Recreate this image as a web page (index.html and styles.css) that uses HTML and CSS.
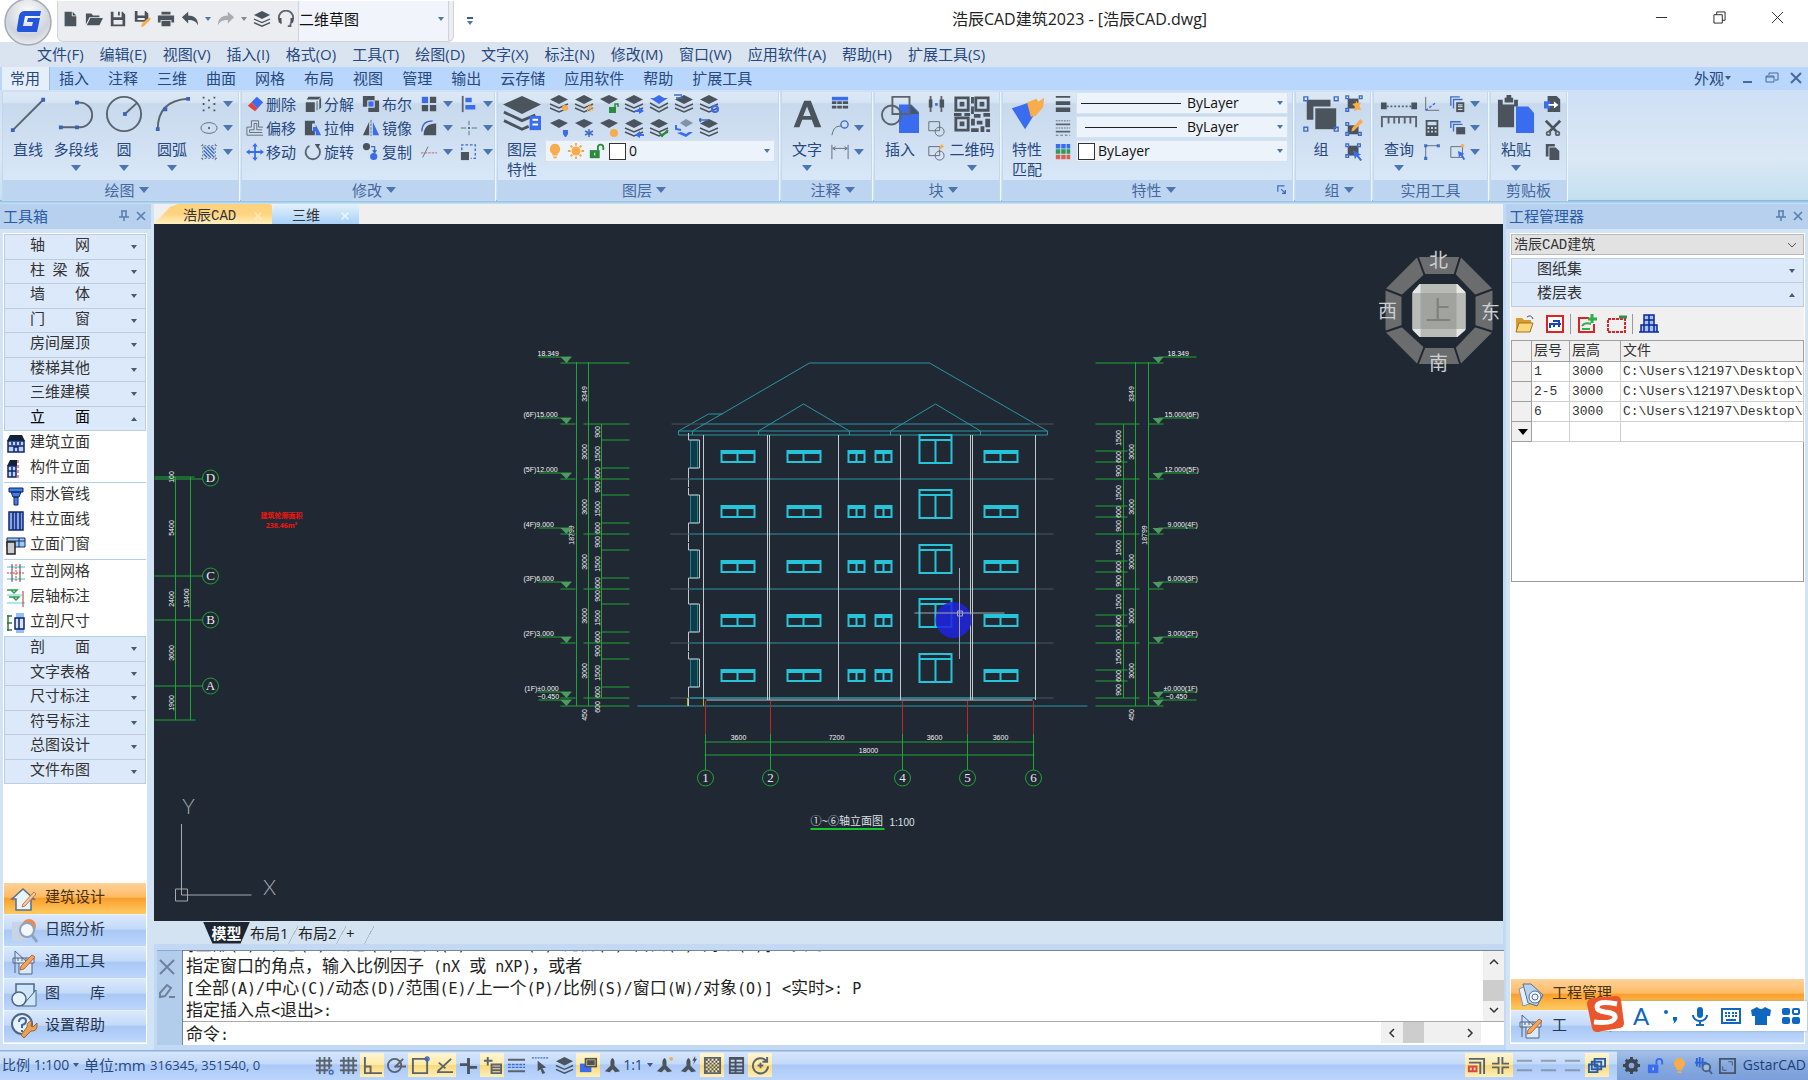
FILE: index.html
```
<!DOCTYPE html>
<html lang="zh-CN">
<head>
    <meta charset="UTF-8">
    <meta name="viewport" content="width=device-width, initial-scale=1.0">
    <title>浩辰CAD建筑2023</title>
    <link rel="stylesheet" href="styles.css">
</head>
<body>
    <!-- shared symbols -->
    <svg class="sprite" aria-hidden="true">
        <symbol id="stack" viewBox="0 0 20 20">
            <path class="d" d="M10 1l9 4.500-9 4.500-9-4.500z"/>
            <path class="ln" d="M1 10l9 4 9-4M1 14l9 4 9-4"/>
        </symbol>
        <symbol id="bulb" viewBox="0 0 20 20">
            <path class="o" d="M10 2a6 6 0 0 0-3 11v2h6v-2a6 6 0 0 0-3-11zM8 16h4v2H8z"/>
        </symbol>
        <symbol id="lock" viewBox="0 0 20 20">
            <path d="M2 9h11v9H2z"/>
            <path d="M11 9V6a3 3 0 0 1 6 0v3" fill="none" stroke="currentColor" stroke-width="2"/>
            <path d="M7 12h1v3H7z" fill="#fff"/>
        </symbol>
        <symbol id="person" viewBox="0 0 20 20">
            <path class="d" d="M10 2c3 2 2 6 2 8l6 6-5 1-3-3-3 3-5-1 6-6c0-2-1-6 2-8z"/>
        </symbol>
        <symbol id="ruler" viewBox="0 0 28 28">
            <path d="M5 2v22M5 2l12 11M3 9h21v5H3zM8 9v3M12 9v3M16 9v3M20 9v3M9 14v11h13V14" fill="#dbe9f8" stroke="#4d6585"/>
            <path d="M25 8L14 20l-4 1 1-4L22 6z" fill="#f6a35c" stroke="#b96a32"/>
        </symbol>
        <symbol id="pin" viewBox="0 0 12 12">
            <path d="M3 1h6M4 1v6M8 1v6M1 7h10M6 7v4" fill="none" stroke="#5a7cae" stroke-width="1.500"/>
        </symbol>
        <symbol id="cross" viewBox="0 0 12 12">
            <path d="M2 2l8 8M10 2l-8 8" fill="none" stroke="#5a7cae" stroke-width="1.600"/>
        </symbol>
    </svg>

    <header class="titlebar">
        <button class="app-button" aria-label="菜单">
            <svg viewBox="0 0 48 48">
                <defs>
                    <radialGradient id="orb" cx=".5" cy=".3" r=".7">
                        <stop offset="0" stop-color="#fff"/><stop offset=".7" stop-color="#cfd3dc"/><stop offset="1" stop-color="#e9ebf0"/>
                    </radialGradient>
                </defs>
                <circle cx="24" cy="24" r="23" fill="url(#orb)" stroke="#a3a8b3" stroke-width="1.500"/>
                <path d="M37 13l-1 5H21l-2 10h9l1-4h-6l1-4h12l-3 14H15q-3 0-2-4l2-12q1-5 6-5z" fill="#2257dc"/>
            </svg>
        </button>
        <div class="quick">
            <button aria-label="新建"><svg viewBox="0 0 20 20"><path class="d" d="M4 2h8v5h5v11H4zM13 2l4 4h-4z"/></svg></button>
            <button aria-label="打开"><svg viewBox="0 0 20 20"><path class="d" d="M1 16V4h6l2 2h7v2H5zM6 9h14l-4 8H2z"/></svg></button>
            <button aria-label="保存"><svg viewBox="0 0 20 20"><path class="d" d="M2 2h3v6h9V2h1l3 3v13H2zm3 9v5h10v-5zM10 2h2v4h-2z" fill-rule="evenodd"/></svg></button>
            <button aria-label="另存为"><svg viewBox="0 0 20 20"><path class="d" d="M2 1h3v5h8V1h1l3 3v9H2zm3 8v2h8V9z" fill-rule="evenodd"/><path class="o" d="M18 8l2 2-8 8-3 1 1-4z"/></svg></button>
            <button aria-label="打印"><svg viewBox="0 0 20 20"><path class="d" d="M5 2h10v3H5zM1 6h18v8h-3v-3H4v3H1zM5 12h10v6H5z"/></svg></button>
            <button aria-label="撤销"><svg viewBox="0 0 20 20"><path class="d" d="M1 8l7-6v4c6 0 11 3 11 11-2-4-5-6-11-6v4z"/></svg></button>
            <i class="tri sm"></i>
            <button aria-label="重做"><svg viewBox="0 0 20 20"><path fill="#a9adb3" d="M19 8l-7-6v4C6 6 1 9 1 17c2-4 5-6 11-6v4z"/></svg></button>
            <i class="tri sm grey"></i>
            <button aria-label="图层"><svg viewBox="0 0 20 20"><use href="#stack"/></svg></button>
            <button aria-label="客服"><svg viewBox="0 0 20 20"><path class="ln2" d="M5 15a8 8 0 1 1 10 0M12 18h3v-3"/><path class="d" d="M2 9h3v5H2zM15 9h3v5h-3z"/></svg></button>
            <div class="space-box">
                <select aria-label="工作空间"><option>二维草图</option></select><i class="tri sm"></i>
            </div>
        </div>
        <button class="more" aria-label="自定义"><span></span><i class="tri sm"></i></button>
        <h1>浩辰CAD建筑2023 - [浩辰CAD.dwg]</h1>
        <div class="win-buttons">
            <button aria-label="最小化"><svg viewBox="0 0 14 14"><path d="M1 7h12"/></svg></button>
            <button aria-label="还原"><svg viewBox="0 0 14 14"><path d="M1 4h9v9H1zM4 4V1h9v9h-3"/></svg></button>
            <button aria-label="关闭"><svg viewBox="0 0 14 14"><path d="M1 1l12 12M13 1L1 13"/></svg></button>
        </div>
    </header>

    <nav class="menubar">
        <a href="#">文件(F)</a><a href="#">编辑(E)</a><a href="#">视图(V)</a><a href="#">插入(I)</a><a href="#">格式(O)</a><a href="#">工具(T)</a><a href="#">绘图(D)</a><a href="#">文字(X)</a><a href="#">标注(N)</a><a href="#">修改(M)</a><a href="#">窗口(W)</a><a href="#">应用软件(A)</a><a href="#">帮助(H)</a><a href="#">扩展工具(S)</a>
    </nav>

    <nav class="tabs">
        <a class="active" href="#">常用</a><a href="#">插入</a><a href="#">注释</a><a href="#">三维</a><a href="#">曲面</a><a href="#">网格</a><a href="#">布局</a><a href="#">视图</a><a href="#">管理</a><a href="#">输出</a><a href="#">云存储</a><a href="#">应用软件</a><a href="#">帮助</a><a href="#">扩展工具</a>
        <div class="tabs-right">
            <button>外观<i class="tri xs"></i></button>
            <button aria-label="最小化"><svg viewBox="0 0 14 14"><path d="M2 11h9" stroke-width="2"/></svg></button>
            <button aria-label="还原"><svg viewBox="0 0 14 14"><path d="M1 5h8v6H1zM4 4V2h9v7h-3M1 6h8" /></svg></button>
            <button aria-label="关闭"><svg viewBox="0 0 14 14"><path d="M2 2l10 10M12 2L2 12" stroke-width="2"/></svg></button>
        </div>
    </nav>

    <section class="ribbon">
        <div class="panel p-draw">
            <div class="tools">
                <button class="big"><svg viewBox="0 0 40 40"><path class="ln2" d="M4 37L36 5"/><path class="n" d="M2 35h4v4H2zM34 3h4v4h-4z"/></svg>直线</button>
                <button class="big"><svg viewBox="0 0 40 40"><path class="ln2" d="M20 8h4a13 13 0 0 1 0 26H4"/><path class="n" d="M19 6h4v4h-4zM2 32h4v4H2zM19 32h4v4h-4z"/></svg>多段线<i class="tri"></i></button>
                <button class="big"><svg viewBox="0 0 40 40"><circle class="ln2" cx="20" cy="20" r="18"/><path class="ln2" d="M21 20L34 8"/><path class="n" d="M19 18h4v4h-4z"/></svg>圆<i class="tri"></i></button>
                <button class="big"><svg viewBox="0 0 40 40"><path class="ln2" d="M5 36Q5 6 37 4"/><path class="n" d="M3 34h4v4H3zM11 13h4v4h-4zM35 2h4v4h-4z"/></svg>圆弧<i class="tri"></i></button>
                <div class="rows">
                    <div><button aria-label="点"><svg viewBox="0 0 20 20"><path class="d" d="M3 2h2v2H3zM3 9h2v2H3zM3 16h2v2H3zM15 2h2v2h-2zM15 9h2v2h-2zM15 16h2v2h-2zM9 5h2v2H9zM9 13h2v2H9z"/></svg></button><i class="tri"></i></div>
                    <div><button aria-label="椭圆"><svg viewBox="0 0 20 20"><ellipse class="ln1" cx="10" cy="10" rx="9" ry="6"/><path class="n" d="M9 9h2v2H9z"/></svg></button><i class="tri"></i></div>
                    <div><button aria-label="填充"><svg viewBox="0 0 20 20"><path class="ln1" d="M3 1v18M17 1v18M1 3h18M1 17h18" stroke-dasharray="2 2"/><path class="nl hatch" d="M4 4l12 12M8 4l8 8M12 4l4 4M4 8l8 8M4 12l4 4"/></svg></button><i class="tri"></i></div>
                </div>
            </div>
            <h2>绘图<i class="tri"></i></h2>
        </div>

        <div class="panel p-modify">
            <div class="tools modify">
                <button><svg viewBox="0 0 20 20"><path class="b" d="M12 2l7 6-6 7-7-7z"/><path fill="#d9453f" d="M6 8l7 7-3 3-8-6z"/></svg>删除</button>
                <button><svg viewBox="0 0 20 20"><path class="d" d="M2 8h10v11H2zM5 2h14l-3 3H3zM14 7l1-1v11h-1zM17 5l2-2v11l-2 2z"/></svg>分解</button>
                <button><svg viewBox="0 0 20 20"><path class="d" d="M1 1h13v5h5v13H7v-6H1z"/><path fill="#fff" d="M6 6h8v8H6z"/><path class="b" d="M7 7h6v6H7z"/></svg>布尔</button>
                <div><button aria-label="阵列"><svg viewBox="0 0 20 20"><path class="d" d="M11 2h7v7h-7zM2 11h7v7H2zM11 11h7v7h-7z"/><path class="b" d="M2 2h7v7H2z"/></svg></button><i class="tri"></i></div>
                <div><button aria-label="对齐"><svg viewBox="0 0 20 20"><path class="ln2" d="M3 1v18"/><path class="b" d="M6 3h7v5H6zM6 11h11v5H6z"/></svg></button><i class="tri"></i></div>
                <button><svg viewBox="0 0 20 20"><path class="ln1" d="M1 9h5V2h8v7h5M1 18h18M1 9v9M4 15v-3h5V5h3v7h6M4 15h14"/></svg>偏移</button>
                <button><svg viewBox="0 0 20 20"><path class="d" d="M1 2h11v3H9v8h3v5H1z"/><path class="b" d="M13 6l6 12h-6v-4h-3V9h3z"/></svg>拉伸</button>
                <button><svg viewBox="0 0 20 20"><path class="d" d="M8 3v15H1z"/><path class="b" d="M12 3v15h7z"/><path class="ln1" d="M10 1v18" stroke-dasharray="3 1"/></svg>镜像</button>
                <div><button aria-label="圆角"><svg viewBox="0 0 20 20"><path class="nl" d="M2 14C2 5 7 2 14 2"/><path class="d" d="M4 18C4 9 9 5 18 5v13z"/></svg></button><i class="tri"></i></div>
                <div><button aria-label="打断"><svg viewBox="0 0 20 20"><path class="ln1" d="M10 2v5M10 13v5M1 10h6M13 10h6"/><path class="n" d="M9 9h2v2H9z"/></svg></button><i class="tri"></i></div>
                <button><svg viewBox="0 0 20 20"><path class="b" d="M10 0l3 4h-2v5h5V7l4 3-4 3v-2h-5v5h2l-3 4-3-4h2v-5H4v2l-4-3 4-3v2h5V4H7z"/></svg>移动</button>
                <button><svg viewBox="0 0 20 20"><path class="ln2" d="M6 3a8 8 0 1 0 9 1"/><path class="d" d="M12 1h6l-3 5z"/></svg>旋转</button>
                <button><svg viewBox="0 0 20 20"><circle class="d" cx="5" cy="4" r="4"/><path class="nl" d="M10 4h4v6M12 8l2 3 2-3"/><circle class="b" cx="13" cy="15" r="4"/></svg>复制</button>
                <div><button aria-label="延伸"><svg viewBox="0 0 20 20"><path class="ln1" d="M3 16L9 4"/><path d="M1 11h18" stroke="#b3686a" stroke-dasharray="3 1"/></svg></button><i class="tri"></i></div>
                <div><button aria-label="缩放"><svg viewBox="0 0 20 20"><path class="nl" d="M2 8V2h15v15h-5" stroke-dasharray="3 2"/><path class="d" d="M1 10h9v9H1z"/></svg></button><i class="tri"></i></div>
            </div>
            <h2>修改<i class="tri"></i></h2>
        </div>

        <div class="panel p-layer">
            <div class="tools">
                <button class="big"><svg viewBox="0 0 40 40"><path class="d" d="M20 1l20 9-20 10L0 10z"/><path class="ln3" d="M1 18l19 9 14-6M1 27l19 9 7-3"/><path class="b" d="M28 22h12v15H28z"/><path fill="#fff" d="M31 25h6v2h-6zM31 30h6v2h-6z"/></svg>图层特性</button>
                <div class="layer-side">
                    <div class="layer-icons">
                        <button aria-label="关闭"><svg viewBox="0 0 20 20"><use href="#stack"/><circle class="o" cx="16" cy="14" r="3"/></svg></button>
                        <button aria-label="冻结"><svg viewBox="0 0 20 20"><use href="#stack"/><path stroke="#f0b05a" d="M16 10v8M12 14h8M13 11l6 6M19 11l-6 6"/></svg></button>
                        <button aria-label="锁定"><svg viewBox="0 0 20 20"><path class="d" d="M10 1l9 4-9 5-9-5z"/><path fill="#2c8a3d" d="M10 13h7v6h-7z"/><path d="M16 13v-3h3v3" fill="none" stroke="#2c8a3d" stroke-width="1.500"/></svg></button>
                        <button aria-label="匹配"><svg viewBox="0 0 20 20"><use href="#stack"/><path class="b" d="M11 16h4v-3l5 4-5 3v-2h-4z"/></svg></button>
                        <button aria-label="当前"><svg viewBox="0 0 20 20"><path class="b" d="M1 4l4 0 5-3 5 3h4l-9 6z"/><path class="ln" d="M1 9l9 5 9-5M1 13l9 5 9-5"/></svg></button>
                        <button aria-label="状态"><svg viewBox="0 0 20 20"><use href="#stack"/><path class="nl" d="M0 1h8M2 4h7"/></svg></button>
                        <button aria-label="设置"><svg viewBox="0 0 20 20"><use href="#stack"/><circle cx="16" cy="15" r="3" fill="none" stroke="#3b6cf0" stroke-width="2"/></svg></button>
                        <button aria-label="打开"><svg viewBox="0 0 20 20"><path class="d" d="M10 1l9 4-9 5-9-5z"/><path class="b" d="M14 12h5v4l-2 3h-1l-2-3z"/></svg></button>
                        <button aria-label="解冻"><svg viewBox="0 0 20 20"><path class="d" d="M10 1l9 4-9 5-9-5z"/><path class="nl" d="M15 11v8M11 13l8 4M19 13l-8 4"/></svg></button>
                        <button aria-label="解锁"><svg viewBox="0 0 20 20"><path class="d" d="M10 1l9 4-9 5-9-5z"/><circle class="o" cx="15" cy="15" r="4"/></svg></button>
                        <button aria-label="上一个"><svg viewBox="0 0 20 20"><use href="#stack"/><path class="b" d="M20 16h-4v-3l-5 4 5 3v-2h4z"/></svg></button>
                        <button aria-label="确认"><svg viewBox="0 0 20 20"><use href="#stack"/><path d="M10 14l3 4 6-6" fill="none" stroke="#2c8a3d" stroke-width="2"/></svg></button>
                        <button aria-label="漫游"><svg viewBox="0 0 20 20"><path fill="#7f93ab" d="M12 1l7 4-7 4-6-4z"/><path class="b" d="M3 15l4-1 5 2 3-2h4l-7 5z"/><path fill="none" stroke="#3a6cf0" stroke-width="2" d="M2 7v4l5 1"/></svg></button>
                        <button aria-label="合并"><svg viewBox="0 0 20 20"><use href="#stack"/><path class="nl" d="M0 2h9M2 0L0 2l2 2"/></svg></button>
                    </div>
                    <div class="combo layer-combo">
                        <svg viewBox="0 0 20 20"><use href="#bulb"/></svg>
                        <svg viewBox="0 0 20 20"><circle class="o" cx="10" cy="10" r="5"/><path stroke="#f5a63b" stroke-width="2" d="M10 1v3M10 16v3M1 10h3M16 10h3M4 4l2 2M14 14l2 2M16 4l-2 2M6 14l-2 2"/></svg>
                        <svg class="green" viewBox="0 0 20 20"><use href="#lock"/></svg>
                        <span class="swatch"></span>
                        <select aria-label="图层"><option>0</option></select><i class="tri sm"></i>
                    </div>
                </div>
            </div>
            <h2>图层<i class="tri"></i></h2>
        </div>

        <div class="panel p-note">
            <div class="tools">
                <button class="big"><svg viewBox="0 0 40 40"><path class="d" d="M17 6h7l11 28h-7l-3-8H15l-3 8H6zm3 6l-4 10h8z" fill-rule="evenodd"/></svg>文字<i class="tri"></i></button>
                <div class="rows">
                    <div><button aria-label="表格"><svg viewBox="0 0 20 20"><path class="b" d="M1 2h18v4H1z"/><path class="d" d="M1 7h5v3H1zM7 7h5v3H7zM13 7h6v3h-6zM1 12h5v3H1zM7 12h5v3H7zM13 12h6v3h-6z"/></svg></button></div>
                    <div><button aria-label="引线"><svg viewBox="0 0 20 20"><path class="ln1" d="M1 18Q3 8 9 8h3"/><circle class="nl" cx="15" cy="6" r="4"/></svg></button><i class="tri"></i></div>
                    <div><button aria-label="标注"><svg viewBox="0 0 20 20"><path class="ln1" d="M1 2v16M19 2v16M2 6h16M5 4L2 6l3 2M15 4l3 2-3 2"/></svg></button><i class="tri"></i></div>
                </div>
            </div>
            <h2>注释<i class="tri"></i></h2>
        </div>

        <div class="panel p-block">
            <div class="tools">
                <button class="big"><svg viewBox="0 0 40 40"><path class="b" d="M19 10h13l8 8v22H19z"/><path class="d" d="M31 10l9 10h-9z"/><circle class="ln2" cx="11" cy="21" r="10"/><path class="ln2" d="M12 2h18v18H12z"/></svg>插入</button>
                <div class="rows">
                    <div><button aria-label="属性"><svg viewBox="0 0 20 20"><path class="ln2" d="M4 1v18M16 1v18"/><path class="d" d="M2 5h4v9H2zM14 5h5v9h-5z"/><path class="b" d="M9 9h3v3H9z"/></svg></button></div>
                    <div><button aria-label="创建块"><svg viewBox="0 0 20 20"><path class="ln1" d="M2 3h12v10H2z"/><circle class="ln1" cx="14" cy="14" r="5"/></svg></button></div>
                    <div><button aria-label="编辑块"><svg viewBox="0 0 20 20"><path class="ln1" d="M2 4h12v10H2z"/><circle class="ln1" cx="14" cy="14" r="5"/><path class="o" d="M16 1l3 3-7 5z"/></svg></button></div>
                </div>
                <button class="big"><svg viewBox="0 0 40 40"><path class="ln3" d="M3 3h13v13H3zM24 3h13v13H24zM3 24h13v13H3z"/><path class="d" d="M7 7h5v5H7zM28 7h5v5h-5zM7 28h5v5H7zM19 2h3v7h-3zM19 12h3v8h-3zM1 19h8v3H1zM12 19h6v3h-6zM22 20h7v4h-7zM32 19h7v4h-7zM19 25h4v7h-4zM25 27h6v4h-6zM34 25h5v9h-5zM19 35h8v4h-8zM29 33h4v6h-4zM35 36h4v3h-4z"/></svg>二维码<i class="tri"></i></button>
            </div>
            <h2>块<i class="tri"></i></h2>
        </div>

        <div class="panel p-prop">
            <div class="tools">
                <button class="big"><svg viewBox="0 0 40 40"><path class="b" d="M4 14l18-6 6 12-10 16z"/><path class="o" d="M20 8l10-4 2 3 6-4-1 10-8 9-5 1z"/></svg>特性匹配</button>
                <div class="rows">
                    <div><svg viewBox="0 0 20 20"><path class="d" d="M2 1h16v2H2zM2 7h16v4H2zM2 14h16v5H2z"/></svg></div>
                    <div><svg viewBox="0 0 20 20"><path class="ln1" d="M2 2h16M2 10h16" stroke-dasharray="2 1"/><path class="ln2" d="M2 6h16M2 14h16"/><path class="ln1" d="M2 18h16" stroke-dasharray="3 2"/></svg></div>
                    <div><svg viewBox="0 0 20 20"><path class="b" d="M2 1h5v5H2zM8 1h5v5H8zM14 1h4v5h-4z"/><path fill="#2f9b52" d="M2 7h5v5H2zM8 7h5v5H8zM14 7h4v5h-4z"/><path fill="#d9604f" d="M2 13h5v5H2zM8 13h5v5H8zM14 13h4v5h-4z"/></svg></div>
                </div>
                <div class="prop-combos">
                    <div class="combo"><span class="rule"></span><select aria-label="线宽"><option>ByLayer</option></select><i class="tri sm"></i></div>
                    <div class="combo"><span class="rule short"></span><select aria-label="线型"><option>ByLayer</option></select><i class="tri sm"></i></div>
                    <div class="combo"><span class="swatch"></span><select aria-label="颜色"><option>ByLayer</option></select><i class="tri sm"></i></div>
                </div>
            </div>
            <h2>特性<i class="tri"></i><svg class="corner" viewBox="0 0 12 12"><path class="nl" d="M1 8V1h8M5 5l5 5M10 6v4H6"/></svg></h2>
        </div>

        <div class="panel p-group">
            <div class="tools">
                <button class="big"><svg viewBox="0 0 40 40"><path class="d" d="M5 5h25v7H12v14H5z"/><path class="d" d="M14 14h22v22H14"/><path class="nl" d="M2 2h4v4H2zM34 2h4v4h-4zM2 34h4v4H2zM34 34h4v4h-4z"/></svg>组</button>
                <div class="rows">
                    <div><button aria-label="解组"><svg viewBox="0 0 20 20"><path class="d" d="M3 4h12v11H3z"/><path class="nl" d="M1 1h3v3H1zM16 1h3v3h-3zM1 15h3v3H1z"/><path class="o" d="M12 6l2 3 4-1-2 4 2 5-4-1-4 2 1-5-3-3 4-1z"/></svg></button></div>
                    <div><button aria-label="编辑组"><svg viewBox="0 0 20 20"><path class="d" d="M3 7h12v10H3z"/><path class="nl" d="M1 4h3v3H1zM1 15h3v3H1zM15 15h3v3h-3z"/><path class="o" d="M17 0l3 3-10 10-3 1 1-4z"/></svg></button></div>
                    <div><button aria-label="选择组"><svg viewBox="0 0 20 20"><path class="d" d="M3 3h12v11H3z"/><path class="nl" d="M1 1h3v3H1zM14 1h3v3h-3zM1 13h3v3H1z"/><path class="b" d="M9 8l9 5-3 1 4 5-2 1-4-5-2 3z"/></svg></button></div>
                </div>
            </div>
            <h2>组<i class="tri"></i></h2>
        </div>

        <div class="panel p-util">
            <div class="tools">
                <button class="big"><svg viewBox="0 0 40 40"><path class="d" d="M1 8h6v7H1zM33 8h6v7h-6z"/><path class="ln2" d="M7 12h26" stroke-dasharray="2 2"/><path class="ln2" d="M2 34V23h36v11M9 23v7M15 23v7M20 23v7M26 23v7M32 23v7"/></svg>查询<i class="tri"></i></button>
                <div class="rows">
                    <div><button aria-label="坐标"><svg viewBox="0 0 20 20"><path class="ln1" d="M3 2v15h15"/><path class="nl" d="M3 17L15 8" stroke-dasharray="3 2"/></svg></button></div>
                    <div><button aria-label="计算器"><svg viewBox="0 0 20 20"><path class="d" d="M3 1h14v18H3zm2 2v4h10V3zm0 6v2h2V9zm4 0v2h2V9zm4 0v2h2V9zm-8 4v2h2v-2zm4 0v2h2v-2zm4 0v2h2v-2z" fill-rule="evenodd"/></svg></button></div>
                    <div><button aria-label="角点"><svg viewBox="0 0 20 20"><path class="ln1" d="M3 17V3h14"/><path class="nl" d="M2 2h2v2H2zM16 2h2v2h-2zM2 16h2v2H2z"/></svg></button></div>
                </div>
                <div class="rows">
                    <div><button aria-label="快速选择"><svg viewBox="0 0 20 20"><path class="nl" d="M2 12V2h10M5 15V5h10"/><path class="d" d="M8 8h9v11H8z"/><path d="M10 11h5M10 13h5M10 16h5" stroke="#fff"/></svg></button><i class="tri"></i></div>
                    <div><button aria-label="顺序"><svg viewBox="0 0 20 20"><path class="nl" d="M2 10V3h11M5 14V6h10"/><path class="d" d="M8 9h10v8H8z"/></svg></button><i class="tri"></i></div>
                    <div><button aria-label="选择"><svg viewBox="0 0 20 20"><path class="ln1" d="M2 4h13v12H2z"/><circle class="o" cx="15" cy="3" r="2"/><path class="b" d="M10 9l7 3-2 1 3 5-2 1-3-5-2 2z"/></svg></button><i class="tri"></i></div>
                </div>
            </div>
            <h2>实用工具</h2>
        </div>

        <div class="panel p-clip">
            <div class="tools">
                <button class="big"><svg viewBox="0 0 40 40"><path class="d" d="M1 5h5v5h12V5h4v7h-4v22H1zM8 3h2V0h5v3h2v5H8z"/><path class="b" d="M20 12h13l6 7v21H20z"/></svg>粘贴<i class="tri"></i></button>
                <div class="rows">
                    <div><button aria-label="粘贴为块"><svg viewBox="0 0 20 20"><path class="d" d="M4 1h10l4 4v14H4z"/><path class="b" d="M0 7h7v8H0z"/><path fill="#fff" d="M5 10h6V7l5 4-5 4v-3H5z"/></svg></button></div>
                    <div><button aria-label="剪切"><svg viewBox="0 0 20 20"><path class="ln3" d="M2 2l12 12M18 2L6 14"/><circle class="ln2" cx="5" cy="16" r="2"/><circle class="ln2" cx="15" cy="16" r="2"/></svg></button></div>
                    <div><button aria-label="复制"><svg viewBox="0 0 20 20"><path class="d" d="M2 1h10v3H5v11H2z"/><path class="d" d="M6 5h7l4 4v10H6z"/></svg></button></div>
                </div>
            </div>
            <h2>剪贴板</h2>
        </div>
    </section>

    <main class="work">
        <aside class="dock toolbox">
            <div class="dock-head">工具箱<span></span><svg viewBox="0 0 12 12"><use href="#pin"/></svg><svg viewBox="0 0 12 12"><use href="#cross"/></svg></div>
            <div class="dock-body">
                <div class="fold first">
                    <button>轴　　网<i class="tri xs"></i></button>
                    <button>柱&ensp;梁&ensp;板<i class="tri xs"></i></button>
                    <button>墙　　体<i class="tri xs"></i></button>
                    <button>门　　窗<i class="tri xs"></i></button>
                    <button>房间屋顶<i class="tri xs"></i></button>
                    <button>楼梯其他<i class="tri xs"></i></button>
                    <button>三维建模<i class="tri xs"></i></button>
                    <button class="open">立　　面<i class="tri xs up"></i></button>
                </div>
                <div class="sub">
                    <button><svg viewBox="0 0 20 20"><path fill="#123" d="M4 1h12l3 6H1z"/><path fill="#b5d5fb" stroke="#15236b" stroke-width="1.500" d="M2 7h16v11H2zM2 12h16M8 18v-5h4v5M6 8v3M14 8v3M10 8v3"/></svg>建筑立面</button>
                    <button><svg viewBox="0 0 20 20"><path fill="#123" d="M4 1h7v6H1z"/><path fill="#b5d5fb" stroke="#15236b" stroke-width="1.500" d="M2 7h8v11H2zM2 12h8M6 8v10"/><path stroke="#c22" d="M12 1v18" stroke-dasharray="3 2"/></svg>构件立面</button>
                </div>
                <div class="sub">
                    <button><svg viewBox="0 0 20 20"><path fill="#3f7fe0" stroke="#15236b" d="M3 2h14v4H3zM5 6h10l-2 5H7zM8 11h4v8H8z"/></svg>雨水管线</button>
                    <button><svg viewBox="0 0 20 20"><path fill="#7ea7f0" stroke="#15236b" stroke-width="1.500" d="M3 1h14v18H3zM7 1v18M10 1v18M14 1v18"/></svg>柱立面线</button>
                    <button><svg viewBox="0 0 20 20"><path fill="#8fd0f7" stroke="#226" d="M1 2h18v9H1zM1 5h18M13 2v9"/><path fill="#ccc" stroke="#222" stroke-width="1.500" d="M1 6h8v12H1z"/></svg>立面门窗</button>
                </div>
                <div class="sub">
                    <button><svg viewBox="0 0 20 20"><path stroke="#5bb" d="M1 4h18M1 16h18"/><path stroke="#444" d="M6 1v18M14 1v18"/><path stroke="#d33" d="M1 10h18M10 1v18" stroke-dasharray="2 1"/></svg>立剖网格</button>
                    <button><svg viewBox="0 0 20 20"><path fill="none" stroke="#2a9a4a" stroke-width="1.500" d="M1 2h10L8 5 5 2M3 9h10l-3 3-3-3"/><path stroke="#6cc" d="M1 7h15M1 15h18"/><path stroke="#a33" d="M17 3v16"/></svg>层轴标注</button>
                    <button><svg viewBox="0 0 20 20"><path fill="none" stroke="#2a7a3a" stroke-width="1.500" d="M2 2v16M1 3h5M1 10h5M1 17h5"/><path fill="#8fc1f7" d="M10 0h8v20h-8z"/><path fill="#cfe4ff" stroke="#15236b" stroke-width="1.500" d="M9 5h9v11H9zM13 5v11"/></svg>立剖尺寸</button>
                </div>
                <div class="fold second">
                    <button>剖　　面<i class="tri xs"></i></button>
                    <button>文字表格<i class="tri xs"></i></button>
                    <button>尺寸标注<i class="tri xs"></i></button>
                    <button>符号标注<i class="tri xs"></i></button>
                    <button>总图设计<i class="tri xs"></i></button>
                    <button>文件布图<i class="tri xs"></i></button>
                </div>
                <div class="bars">
                    <button class="on"><svg viewBox="0 0 28 28"><path fill="#e8f3fc" stroke="#56708f" stroke-width="1.500" d="M2 14L13 4l11 10h-3v11H6V14z"/><path fill="#f8c79d" stroke="#c77a42" d="M26 9L15 21l-3 1 1-3L24 7z"/></svg>建筑设计</button>
                    <button><svg viewBox="0 0 28 28"><path fill="#c8d4e3" d="M2 5h15v19H2z"/><circle cx="19" cy="9" r="7" fill="#f08a4c"/><circle cx="17" cy="13" r="7" fill="#f3f6fb" stroke="#8fa3bd" stroke-width="2"/><path stroke="#8fa3bd" stroke-width="3" d="M22 18l5 7"/></svg>日照分析</button>
                    <button><svg viewBox="0 0 28 28"><use href="#ruler"/></svg>通用工具</button>
                    <button><svg viewBox="0 0 28 28"><path fill="#cde6f8" stroke="#4d6585" stroke-width="1.500" d="M6 3h18v9L15 23H6z"/><path fill="#cde6f8" stroke="#4d6585" d="M26 9v16H12z"/><circle cx="9" cy="18" r="7" fill="#e6f3fc" stroke="#4d6585" stroke-width="1.500"/></svg>图　　库</button>
                    <button><svg viewBox="0 0 28 28"><circle cx="12" cy="11" r="10" fill="#e6f1fb" stroke="#4d6585" stroke-width="2"/><path fill="none" stroke="#3f6ba3" stroke-width="2" d="M9 9q0-4 4-4 3 0 3 3t-4 4v3M12 17v2"/><path fill="#e8a257" stroke="#9c6433" d="M27 10l-4 4-2-1 1-5q-5 0-5 6l-6 8 3 3 7-7q7 1 6-8z"/></svg>设置帮助</button>
                </div>
            </div>
        </aside>

        <section class="center">
            <div class="doc-tabs">
                <button class="on">浩辰CAD<svg viewBox="0 0 12 12"><path d="M2 2l8 8M10 2l-8 8" stroke="#fff6" stroke-width="2"/></svg></button>
                <button>三维<svg viewBox="0 0 12 12"><path d="M2 2l8 8M10 2l-8 8" stroke="#fffa" stroke-width="2"/></svg></button>
            </div>

            <svg class="canvas" viewBox="154 224 1348 697" role="img" aria-label="①~⑥轴立面图">
                <defs>
                    <g id="win"><path d="M1 1h33v11H1zM1 3h33M17 3v9"/></g>
                    <g id="win-s"><path d="M1 1h16v11H1zM1 3h16M9 3v9"/></g>
                    <!-- one storey, origin at its top line -->
                    <g id="storey">
                        <path class="bay" d="M690 16h7v28h-7z"/>
                        <path class="wall" d="M688 9v7h11v28h-11v19"/>
                        <g class="glass">
                            <use href="#win" x="720" y="26"/>
                            <use href="#win" x="786" y="26"/>
                            <use href="#win-s" x="847" y="26"/>
                            <use href="#win-s" x="874" y="26"/>
                            <path d="M919 11h32v28h-32zM919 16h32M935 16v23"/>
                            <use href="#win" x="983" y="26"/>
                        </g>
                        <path class="teal" d="M689 55h346"/>
                        <path class="faint" d="M670 55h19M1035 55h18"/>
                        <path class="dim" d="M583 55h46M601 16h28M601 44h28M1095 27h32M1095 38h32M1095 55h44M560 55h15M1148 55h15"/>
                        <g class="dim-text">
                            <text transform="translate(586 28) rotate(-90)">3000</text>
                            <text transform="translate(599 8) rotate(-90)">900</text>
                            <text transform="translate(599 30) rotate(-90)">1500</text>
                            <text transform="translate(599 49) rotate(-90)">600</text>
                            <text transform="translate(1120 14) rotate(-90)">1500</text>
                            <text transform="translate(1120 33) rotate(-90)">600</text>
                            <text transform="translate(1120 47) rotate(-90)">900</text>
                            <text transform="translate(1133 28) rotate(-90)">3000</text>
                        </g>
                    </g>
                    <g id="mark">
                        <path class="dim" d="M538 -6h33M1158 -6h38"/>
                        <path class="arrow" d="M560 -6h11l-5 6zM1152 -6h11l-5 6z"/>
                    </g>
                    <g id="axis"><path class="red" d="M0 701v33"/><path class="dim" d="M0 734v36"/><circle class="dim" cy="778" r="8"/></g>
                </defs>

                <!-- plan at the left edge -->
                <path class="dim" d="M154 477h40M154 479h48M154 576h48M154 620h48M154 686h48M154 720h41M175 477v243M190 477v243"/>
                <g class="dim"><circle cx="210" cy="478" r="8"/><circle cx="210" cy="576" r="8"/><circle cx="210" cy="620" r="8"/><circle cx="210" cy="686" r="8"/></g>
                <g class="bubble"><text x="210" y="482">D</text><text x="210" y="580">C</text><text x="210" y="624">B</text><text x="210" y="690">A</text></g>
                <g class="dim-text">
                    <text transform="translate(173 477) rotate(-90)">100</text>
                    <text transform="translate(173 528) rotate(-90)">5400</text>
                    <text transform="translate(173 599) rotate(-90)">2400</text>
                    <text transform="translate(188 598) rotate(-90)">13400</text>
                    <text transform="translate(173 653) rotate(-90)">3600</text>
                    <text transform="translate(173 703) rotate(-90)">1900</text>
                </g>
                <g class="area"><text x="281" y="518">建筑轮廓面积</text><text x="281" y="528">238.46m²</text></g>

                <!-- elevation -->
                <path class="teal" d="M692 431L809 363h120l118 68M678 431l30-17h14M678 431v4h369v-4zM692 431v4M758 435v-4l45-27 46 27v4M890 435v-4l45-27 45 27v4M700 424h330M689 698h346M637 706h450"/>
                <path class="faint" d="M671 424h29M1030 424h23"/>
                <use href="#storey" y="424"/>
                <use href="#storey" y="479"/>
                <use href="#storey" y="534"/>
                <use href="#storey" y="588"/>
                <use href="#storey" y="643"/>
                <path class="wall" d="M703 435v265M767 435v265M769 435v265M838 435v265M900 435v265M970 435v265M972 435v265M1035 435v265M706 700h326"/>
                <path class="yellow" d="M687 698v8M703 698v8"/>

                <path class="dim" d="M560 363h69M560 424h15M583 424h46M1095 363h68M1095 424h44M1148 424h15M560 706h69M1095 706h68M576 362v344M588 362v344M601 424v274M1123 424v274M1135 362v344M1148 362v344"/>
                <g class="dim-text">
                    <text transform="translate(586 394) rotate(-90)">3349</text>
                    <text transform="translate(573 535) rotate(-90)">18799</text>
                    <text transform="translate(586 715) rotate(-90)">450</text>
                    <text transform="translate(599 707) rotate(-90)">600</text>
                    <text transform="translate(1133 394) rotate(-90)">3349</text>
                    <text transform="translate(1146 535) rotate(-90)">18799</text>
                    <text transform="translate(1133 715) rotate(-90)">450</text>
                </g>
                <use href="#mark" y="363"/><use href="#mark" y="424"/><use href="#mark" y="479"/><use href="#mark" y="534"/><use href="#mark" y="588"/><use href="#mark" y="643"/><use href="#mark" y="698"/><use href="#mark" y="706"/>
                <g class="level">
                    <text x="537" y="356">18.349</text><text x="523" y="417">(6F)15.000</text><text x="523" y="472">(5F)12.000</text><text x="523" y="527">(4F)9.000</text><text x="523" y="581">(3F)6.000</text><text x="523" y="636">(2F)3.000</text><text x="524" y="691">(1F)±0.000</text><text x="537" y="699">−0.450</text>
                    <text x="1167" y="356">18.349</text><text x="1164" y="417">15.000(6F)</text><text x="1164" y="472">12.000(5F)</text><text x="1167" y="527">9.000(4F)</text><text x="1167" y="581">6.000(3F)</text><text x="1167" y="636">3.000(2F)</text><text x="1163" y="691">±0.000(1F)</text><text x="1165" y="699">−0.450</text>
                </g>

                <use href="#axis" x="705"/><use href="#axis" x="770"/><use href="#axis" x="902"/><use href="#axis" x="967"/><use href="#axis" x="1033"/>
                <path class="dim" d="M704 742h330M704 755h330"/>
                <g class="dim-text"><text x="738" y="740">3600</text><text x="836" y="740">7200</text><text x="934" y="740">3600</text><text x="1000" y="740">3600</text><text x="868" y="753">18000</text></g>
                <g class="bubble"><text x="705" y="782">1</text><text x="770" y="782">2</text><text x="902" y="782">4</text><text x="967" y="782">5</text><text x="1033" y="782">6</text></g>
                <text class="caption" x="810" y="825">①~⑥轴立面图</text><text class="caption scale" x="889" y="826">1:100</text>
                <path class="dim strong" d="M810 829h74"/>

                <!-- cursor -->
                <circle class="touch" cx="953" cy="620" r="18"/>
                <path class="cursor" d="M959 568v91M914 613h90M957 611h5v5h-5z"/>

                <!-- ucs -->
                <path class="cursor" d="M181 824v71h70M175 889h12v12h-12z"/>
                <g class="ucs"><text x="188" y="814">Y</text><text x="269" y="895">X</text></g>

                <!-- view compass -->
                <path fill="#6b6c6d" fill-rule="evenodd" d="M1417 257h43l32 32v43l-32 32h-43l-32-32v-43zM1424 274l-23 21v32l23 21h31l20-21v-32l-20-21z"/>
                <path stroke="#202833" stroke-width="2" d="M1417 256l7 19M1460 256l-6 19M1493 289l-19 7M1493 332l-19-6M1460 365l-6-18M1417 365l7-18M1384 332l18-6M1384 289l18 7"/>
                <path fill="#e4e7e3" d="M1419 284h38l8 8v38l-8 7h-38l-7-7v-38z"/>
                <path fill="#b9bcb6" d="M1420 284h36v53h-36zM1412 293h53v36h-53z"/>
                <path fill="#a1a49e" d="M1420 293h36v36h-36z"/>
                <g class="compass"><text x="1438" y="267">北</text><text x="1438" y="370">南</text><text x="1387" y="318">西</text><text x="1490" y="319">东</text><text class="top" x="1438" y="320">上</text></g>
            </svg>

            <div class="layout-tabs">
                <button class="on">模型</button><button>布局1</button><button>布局2</button><button>+</button>
            </div>

            <div class="command">
                <div class="command-side">
                    <svg viewBox="0 0 18 18"><path d="M2 2l14 14M16 2L2 16" fill="none" stroke="#6f8299" stroke-width="2"/></svg>
                    <svg viewBox="0 0 18 18"><path d="M2 11l7-8 4 3-6 8-5 1zM11 15h6" fill="none" stroke="#6f8299" stroke-width="2"/></svg>
                </div>
                <div class="command-main">
                    <div class="history">
                        <div class="lines">
                            <p><b>[</b>全部<b>(A)/</b>中心<b>(C)/</b>动态<b>(D)/</b>范围<b>(E)/</b>上一个<b>(P)/</b>比例<b>(S)/</b>窗口<b>(W)/</b>对象<b>(O)] &lt;</b>实时<b>&gt;:</b></p>
                            <p>指定窗口的角点，输入比例因子<b> (nX </b>或<b> nXP)</b>，或者</p>
                            <p><b>[</b>全部<b>(A)/</b>中心<b>(C)/</b>动态<b>(D)/</b>范围<b>(E)/</b>上一个<b>(P)/</b>比例<b>(S)/</b>窗口<b>(W)/</b>对象<b>(O)] &lt;</b>实时<b>&gt;: P</b></p>
                            <p>指定插入点<b>&lt;</b>退出<b>&gt;:</b></p>
                        </div>
                        <div class="vscroll"><svg viewBox="0 0 12 12"><path d="M2 8l4-4 4 4"/></svg><span></span><svg viewBox="0 0 12 12"><path d="M2 4l4 4 4-4"/></svg></div>
                    </div>
                    <div class="prompt">
                        <label for="cmd">命令<b>:</b></label><input id="cmd" type="text">
                        <div class="hscroll"><svg viewBox="0 0 12 12"><path d="M8 2L4 6l4 4"/></svg><span></span><i></i><svg viewBox="0 0 12 12"><path d="M4 2l4 4-4 4"/></svg></div>
                    </div>
                </div>
            </div>
        </section>

        <aside class="dock manager">
            <div class="dock-head">工程管理器<span></span><svg viewBox="0 0 12 12"><use href="#pin"/></svg><svg viewBox="0 0 12 12"><use href="#cross"/></svg></div>
            <div class="dock-body">
                <div class="project"><select aria-label="工程"><option>浩辰CAD建筑</option></select><svg viewBox="0 0 12 12"><path d="M2 4l4 4 4-4" fill="none" stroke="#555"/></svg></div>
                <div class="fold">
                    <button>图纸集<i class="tri xs"></i></button>
                    <button>楼层表<i class="tri xs up"></i></button>
                </div>
                <div class="floor-tools">
                    <button aria-label="打开"><svg viewBox="0 0 20 20"><path fill="#d99a2b" d="M1 4h6l2 2h7v12H1z"/><path fill="#fbd77c" stroke="#9d7428" d="M4 9h14l-3 9H1z"/><path fill="none" stroke="#357" d="M12 3q4-3 6 2"/></svg></button>
                    <button aria-label="选择"><svg viewBox="0 0 20 20"><path fill="#fff" stroke="#d22" stroke-width="2" d="M2 2h16v16H2z"/><path fill="none" stroke="#1744b8" stroke-width="2" d="M5 14v-4h4v3M8 7h6v6M8 10h8"/></svg></button>
                    <button class="cut" aria-label="添加"><svg viewBox="0 0 20 20"><path fill="none" stroke="#d22" stroke-width="2" d="M12 4H2v14h15v-8"/><path stroke="#2fae49" stroke-width="3" d="M15 0v9M11 5h9"/><path fill="none" stroke="#2fae49" stroke-width="2" d="M5 12q3-4 9-2M5 15h8"/></svg></button>
                    <button aria-label="删除"><svg viewBox="0 0 20 20"><path fill="none" stroke="#d22" stroke-width="2" stroke-dasharray="3 1" d="M1 5h17v13H1z"/><path stroke="#2f8e49" stroke-width="3" d="M12 3h8"/></svg></button>
                    <button class="cut" aria-label="三维组合"><svg viewBox="0 0 20 20"><path fill="#9fc7fa" stroke="#10259c" stroke-width="1.500" d="M5 1h10v17H5zM2 11h16v7H2zM5 6h10M10 1v17M0 18h20"/></svg></button>
                </div>
                <table>
                    <thead><tr><th class="c0"></th><th class="c1">层号</th><th class="c2">层高</th><th>文件</th></tr></thead>
                    <tbody>
                        <tr><th></th><td>1</td><td>3000</td><td>C:\Users\12197\Desktop\浩</td></tr>
                        <tr><th></th><td>2-5</td><td>3000</td><td>C:\Users\12197\Desktop\浩</td></tr>
                        <tr><th></th><td>6</td><td>3000</td><td>C:\Users\12197\Desktop\浩</td></tr>
                        <tr><th><i class="tri black"></i></th><td></td><td></td><td></td></tr>
                    </tbody>
                </table>
                <div class="blank"></div>
                <div class="bars">
                    <button class="on"><svg viewBox="0 0 28 28"><path fill="#e8eef6" stroke="#8295ad" d="M2 8l9-4 4 18-9 3z"/><path fill="#b8d3ee" stroke="#56708f" d="M6 3h8l12 11-6 11-9-3z"/><circle cx="18" cy="16" r="6" fill="#eef4fa" stroke="#56708f"/><circle cx="18" cy="16" r="3" fill="none" stroke="#56708f"/></svg>工程管理</button>
                    <button><svg viewBox="0 0 28 28"><use href="#ruler"/></svg>工　　具</button>
                </div>
            </div>
        </aside>
    </main>

    <footer class="status">
        <button class="txt scale-button">比例 1:100<i class="tri xs"></i></button>
        <span class="unit">单位:mm</span>
        <span class="coords">316345, 351540, 0</span>
        <div class="toggles">
            <button aria-label="捕捉"><svg viewBox="0 0 20 20"><path class="ln2" d="M1 5h17M1 10h17M1 15h13M5 1v18M10 1v18M15 1v13"/><circle class="nl" cx="17" cy="17" r="2"/></svg></button>
            <button aria-label="栅格"><svg viewBox="0 0 20 20"><path class="ln2" d="M1 5h18M1 10h18M1 15h18M5 1v18M10 1v18M15 1v18"/></svg></button>
            <button class="on" aria-label="正交"><svg viewBox="0 0 20 20"><path class="ln2" d="M2 1v17h18M2 11h6v7"/></svg></button>
            <button aria-label="极轴"><svg viewBox="0 0 20 20"><circle class="ln2" cx="8" cy="10" r="7"/><path class="ln2" d="M8 12l9-9M8 11h12"/></svg></button>
            <button class="on" aria-label="对象捕捉"><svg viewBox="0 0 20 20"><path class="ln2" d="M2 3h15v15H2z"/><circle class="nl" cx="17" cy="3" r="2"/></svg></button>
            <button class="on" aria-label="追踪"><svg viewBox="0 0 20 20"><path class="ln2" d="M2 17h17M3 16L17 3M4 7l7 6"/></svg></button>
            <button aria-label="动态UCS"><svg viewBox="0 0 20 20"><path class="ln3" d="M1 9h9V2M10 19v-7h9"/></svg></button>
            <button class="on" aria-label="动态输入"><svg viewBox="0 0 20 20"><path class="ln2" d="M5 1v9M1 5h9M9 9h10v9H9zM9 12h10M9 15h10"/></svg></button>
            <button aria-label="线宽"><svg viewBox="0 0 20 20"><path class="ln2" d="M1 4h18M1 16h18"/><path class="nl" d="M1 9h18M1 12h18" stroke-dasharray="3 1"/></svg></button>
            <button aria-label="循环选择"><svg viewBox="0 0 20 20"><path class="nl" d="M1 2h17" stroke-dasharray="2 1"/><path class="d" d="M7 5l9 7-4 1 3 5-3 1-2-5-3 2z"/></svg></button>
            <button aria-label="图层"><svg viewBox="0 0 20 20"><use href="#stack"/></svg></button>
            <button class="on" aria-label="注释"><svg viewBox="0 0 20 20"><path class="b" d="M1 8h12v9H1z"/><path class="d" d="M6 2h13v10H6z"/><path d="M8 4h9v6H8z" fill="none" stroke="#c9b46c"/></svg></button>
            <button aria-label="注释比例"><svg viewBox="0 0 20 20"><use href="#person"/></svg></button>
            <button class="txt">1:1<i class="tri xs"></i></button>
            <button aria-label="注释可见"><svg viewBox="0 0 20 20"><use href="#person"/><circle class="o" cx="17" cy="3" r="2"/></svg></button>
            <button aria-label="自动缩放"><svg viewBox="0 0 20 20"><use href="#person"/><path class="d" d="M17 0l-3 5h2l-1 4 4-6h-2z"/></svg></button>
            <button class="on" aria-label="透明"><svg viewBox="0 0 20 20"><path class="ln2" d="M2 2h16v16H2z"/><path stroke="#4b535d" stroke-width="2" stroke-dasharray="2 2" d="M3 4h14M5 6h12M3 8h14M5 10h12M3 12h14M5 14h12M3 16h14"/></svg></button>
            <button aria-label="特性"><svg viewBox="0 0 20 20"><path class="d" d="M2 1h16v18H2zm2 3v2h4V4zm6 0v2h6V4zM4 8v2h4V8zm6 0v2h6V8zm-6 4v2h4v-2zm6 0v2h6v-2zm-6 4v1h4v-1zm6 0v1h6v-1z" fill-rule="evenodd"/></svg></button>
            <button class="on" aria-label="刷新"><svg viewBox="0 0 20 20"><path class="ln2" d="M16 5a8 8 0 1 0 2 6M10 7v6M7 10h6M17 1v5h-5"/></svg></button>
        </div>
        <div class="toggles right">
            <button class="on" aria-label="墙线"><svg viewBox="0 0 20 20"><path class="ln2" d="M2 3h16v16M2 7h12v12"/><path d="M2 11h8v5H2zM6 11v5" fill="none" stroke="#d44" stroke-width="2"/></svg></button>
            <button class="on" aria-label="交叉"><svg viewBox="0 0 20 20"><path class="ln2" d="M1 8h7V1M12 1v7h7M19 12h-7v7M8 19v-7H1"/></svg></button>
            <button aria-label="填充"><svg class="dim-ic" viewBox="0 0 20 20"><path class="ln2" d="M2 5h16M2 15h16"/></svg></button>
            <button aria-label="加粗"><svg class="dim-ic" viewBox="0 0 20 20"><path class="ln2" d="M2 5h16M2 15h16"/></svg></button>
            <button aria-label="基线"><svg class="dim-ic" viewBox="0 0 20 20"><path class="ln2" d="M2 5h16M2 15h16"/></svg></button>
            <button class="on" aria-label="多窗口"><svg viewBox="0 0 20 20"><path fill="#dfeaf8" stroke="#2d5c9e" stroke-width="2" d="M8 3h11v8H8zM5 6h10v8H5zM2 9h9v8H2z"/></svg></button>
        </div>
        <div class="tray">
            <button aria-label="设置"><svg viewBox="0 0 20 20"><circle cx="10" cy="10" r="5" fill="none" stroke="#3d4652" stroke-width="4"/><path stroke="#3d4652" stroke-width="3" d="M10 1v3M10 16v3M1 10h3M16 10h3M4 4l2 2M14 14l2 2M16 4l-2 2M6 14l-2 2"/></svg></button>
            <button class="blue" aria-label="锁定"><svg viewBox="0 0 20 20"><use href="#lock"/></svg></button>
            <button aria-label="提示"><svg viewBox="0 0 20 20"><use href="#bulb"/></svg></button>
            <button aria-label="查找"><svg viewBox="0 0 20 20"><path stroke="#2f63d8" stroke-width="2" d="M1 7h12M3 2v9M6 1v11M9 2v9"/><circle cx="13" cy="12" r="4" fill="#9db9e6" stroke="#4b5f80" stroke-width="2"/><path stroke="#4b5f80" stroke-width="2" d="M16 15l3 4"/></svg></button>
            <button aria-label="全屏"><svg viewBox="0 0 20 20"><path fill="none" stroke="#46566d" stroke-width="2" d="M2 3h16v15H2z"/><path fill="none" stroke="#46566d" d="M11 6h4v4M9 15H5v-4"/></svg></button>
            <span>GstarCAD</span>
        </div>
    </footer>

    <!-- input method bar floats over the window -->
    <div class="ime">
        <svg class="ime-logo" viewBox="0 0 38 38"><path fill="#e9562b" d="M6 3l24-2q4 0 5 4l3 23q0 4-4 5l-23 4q-4 0-5-4L1 9q0-5 5-6z"/><path fill="none" stroke="#fff" stroke-width="5" d="M31 9q-20-4-20 3 0 4 8 5 11 1 10 6-2 6-21 4"/></svg>
        <button aria-label="英文">A</button>
        <button aria-label="标点"><svg viewBox="0 0 20 20"><circle cx="6" cy="6" r="2"/><path d="M13 11h4q1 4-4 7 2-3 0-4z"/></svg></button>
        <button aria-label="语音"><svg viewBox="0 0 20 20"><rect x="7" y="1" width="6" height="11" rx="3"/><path d="M3 9a7 6 0 0 0 14 0M10 15v4M6 19h8" fill="none" stroke="#0f67c0" stroke-width="2"/></svg></button>
        <button aria-label="键盘"><svg viewBox="0 0 20 20"><path d="M1 3h18v14H1z" fill="none" stroke="#0f67c0" stroke-width="2"/><path d="M4 6h2v2H4zM7 6h2v2H7zM11 6h2v2h-2zM14 6h2v2h-2zM4 9h2v2H4zM7 9h2v2H7zM11 9h2v2h-2zM14 9h2v2h-2zM5 13h10v2H5z"/></svg></button>
        <button aria-label="皮肤"><svg viewBox="0 0 20 20"><path d="M6 1q4 4 8 0l6 3-1 6h-3v9H4v-9H1L0 4z"/></svg></button>
        <button aria-label="工具箱"><svg viewBox="0 0 20 20"><rect x="1" y="2" width="8" height="7" rx="2"/><rect x="1" y="11" width="8" height="7" rx="2"/><rect x="11" y="11" width="8" height="7" rx="2"/><rect x="12" y="3" width="6" height="5" rx="1" fill="none" stroke="#0f67c0" stroke-width="2"/></svg></button>
    </div>
</body>
</html>
```
FILE: styles.css
```
* {
    box-sizing: border-box;
}

body {
    margin: 0;
    height: 100vh;
    display: flex;
    flex-direction: column;
    overflow: hidden;
    background-color: #c3d8f2;
    color: #27487f;
    font-family: "Open Sans", "Noto Sans CJK SC", sans-serif;
    font-size: 15px;
    line-height: 20px;
}

button, select, input {
    font: inherit;
    color: inherit;
    background: none;
    border: none;
    padding: 0;
    margin: 0;
}

a {
    color: inherit;
    text-decoration: none;
}

h1, h2, p {
    margin: 0;
    font-size: 15px;
    font-weight: normal;
}

select {
    appearance: none;
    outline: none;
    flex: 1;
    min-width: 0;
    color: #111;
}

svg {
    display: block;
    flex: none;
}

.sprite {
    position: absolute;
    width: 0;
    height: 0;
}

/* icon paint */
.d { fill: #4b535d; }
.b { fill: #3a6cf0; }
.n { fill: #3d63b5; }
.o { fill: #f8ac4b; }
.ln { fill: none; stroke: #4b535d; stroke-width: 1.5; }
.ln1 { fill: none; stroke: #5d6774; stroke-width: 1; }
.ln2 { fill: none; stroke: #5b636e; stroke-width: 2; }
.ln3 { fill: none; stroke: #4b535d; stroke-width: 3; }
.nl { fill: none; stroke: #3f6bc4; stroke-width: 1.5; }
.green { color: #2c8a3d; fill: #2c8a3d; }
.blue { color: #3a6cf0; fill: #3a6cf0; }

.tri {
    flex: none;
    width: 0;
    height: 0;
    border: 5px solid transparent;
    border-top: 6px solid #4d76b0;
    border-bottom: 0;
}

.tri.sm {
    border-width: 4px 3px 0;
}

.tri.xs {
    border-width: 4px 3px 0;
    border-top-color: #445a78;
}

.tri.xs.up {
    border-width: 0 3px 4px;
    border-bottom: 4px solid #445a78;
}

.tri.grey {
    border-top-color: #888;
}

.tri.black {
    display: block;
    margin: 0 auto;
    border-top-color: #000;
}

/* title bar */
.titlebar {
    position: relative;
    flex: none;
    height: 42px;
    display: flex;
    align-items: center;
    background-color: #fff;
}

.app-button {
    position: absolute;
    left: 4px;
    top: -2px;
    z-index: 2;
}

.app-button svg {
    width: 48px;
    height: 48px;
}

.quick {
    width: 397px;
    height: 41px;
    margin-left: 57px;
    padding-bottom: 4px;
    display: flex;
    align-items: center;
    background-color: #ebedf1;
    border: 1px solid #cfd4dc;
    border-top: 0;
    border-radius: 0 0 6px 6px;
}

.quick button {
    width: 24px;
    display: flex;
    justify-content: center;
}

.quick svg {
    width: 18px;
    height: 18px;
}

.quick > .tri {
    margin: 0 3px;
}

.space-box {
    flex: 1;
    align-self: stretch;
    margin: 0 4px -4px 0;
    padding: 0 4px 4px 0;
    display: flex;
    align-items: center;
    background-color: #f1f4fb;
    border-left: 1px solid #ccd3df;
    border-right: 1px solid #ccd3df;
}

.more {
    margin-left: 13px;
}

.more span {
    display: block;
    width: 6px;
    height: 2px;
    margin-bottom: 2px;
    background-color: #445a78;
}

.more .tri {
    display: block;
}

h1 {
    flex: 1;
    padding-left: 54px;
    padding-bottom: 4px;
    text-align: center;
    font-size: 16px;
    color: #222;
}

.win-buttons {
    display: flex;
    padding: 0 2px 8px 0;
}

.win-buttons button {
    width: 58px;
    display: flex;
    justify-content: center;
}

.win-buttons svg {
    width: 13px;
    height: 13px;
    fill: none;
    stroke: #222;
}

/* menus */
.menubar {
    flex: none;
    height: 25px;
    padding: 0 37px 2px;
    display: flex;
    align-items: center;
    gap: 16px;
    background-color: #dae4f0;
}

.tabs {
    flex: none;
    height: 23px;
    padding-left: 2px;
    display: flex;
    background-color: #b9d7fc;
}

.tabs a {
    padding: 1px 9px 2px;
    margin-right: 1px;
}

.tabs a.active {
    padding-left: 8px;
    background-color: #e6eff9;
    border-right: 1px solid #9fbbe0;
    margin-right: 0;
}

.tabs-right {
    margin-left: auto;
    padding-right: 5px;
    padding-bottom: 2px;
    display: flex;
    align-items: center;
    gap: 10px;
}

.tabs-right button {
    display: flex;
    align-items: center;
    gap: 1px;
}

.tabs-right svg {
    width: 14px;
    height: 14px;
    fill: none;
    stroke: #48699c;
}

/* ribbon */
.ribbon {
    flex: none;
    height: 114px;
    padding: 2px 2px 3px;
    display: flex;
    gap: 2px;
    background: linear-gradient(#cfe0f5, #dbe8f5 60%, #c4e0f0 96%, #86b8e0 97%, #cde6f8);
}

.panel {
    flex: none;
    display: flex;
    flex-direction: column;
    border: 1px solid #c3d7ed;
    border-top: 0;
    box-shadow: 1px 0 #eef5fc;
    background: linear-gradient(#dce8f5, #d7e4f3 10px, #c8d9ed 12px, #d8e7f7 85px);
}

.panel h2 {
    position: relative;
    height: 20px;
    padding-left: 12px;
    display: flex;
    align-items: center;
    justify-content: center;
    gap: 4px;
    color: #44699f;
    background-color: #bdd5f1;
}

.panel.p-util h2, .panel.p-clip h2 {
    padding-left: 0;
}

.corner {
    position: absolute;
    right: 5px;
    width: 10px;
    height: 10px;
}

.tools {
    flex: 1;
    display: flex;
    padding-left: 1px;
}

.big {
    width: 48px;
    align-self: flex-start;
    display: flex;
    flex-direction: column;
    align-items: center;
    padding: 0 1px;
    white-space: normal;
}

.big svg {
    width: 38px;
    height: 38px;
    margin: 3px 0 6px;
}

.big .tri {
    margin-top: 6px;
}

.rows > div, .modify > div {
    height: 24px;
    display: flex;
    align-items: center;
    gap: 5px;
}

.rows svg, .modify svg {
    width: 18px;
    height: 18px;
}

.modify {
    display: grid;
    grid-template-columns: 58px 58px 58px 40px 30px;
    grid-template-rows: 24px 24px 24px;
    padding-left: 4px;
}

.modify > button {
    display: flex;
    align-items: center;
    gap: 2px;
}

.p-draw { width: 237px; }
.p-draw .rows { margin-left: 4px; }
.p-modify { width: 254px; }
.p-layer { width: 282px; }
.p-layer .big { width: 46px; padding: 0 7px; }
.p-layer .big svg, .p-prop .big svg { margin-left: -4px; margin-right: -4px; }
.p-note { width: 91px; }
.p-block { width: 126px; }
.p-block .rows { margin: 0 3px; }
.p-prop { width: 291px; }
.p-prop .big { width: 46px; padding: 0 8px; }
.p-prop .rows { margin: 0 4px; }
.p-group { width: 76px; }
.p-util { width: 115px; }
.p-util .rows + .rows { margin-left: 8px; }
.p-util .rows div { gap: 3px; }
.p-clip { width: 77px; }
.p-clip .rows { margin-left: 4px; }

.layer-side {
    flex: 1;
    padding-right: 3px;
}

.layer-icons {
    display: grid;
    grid-template-columns: repeat(7, 25px);
    grid-auto-rows: 24px;
    padding-left: 4px;
}

.layer-icons svg {
    width: 20px;
    height: 20px;
}

.combo {
    height: 22px;
    padding: 0 4px 0 1px;
    display: flex;
    align-items: center;
    background-color: #edf3fb;
    border: 1px solid #d6e2f0;
    font-size: 14px;
}

.layer-combo {
    padding-left: 0;
}

.layer-combo svg {
    width: 18px;
    height: 18px;
    margin-right: 3px;
}

.swatch {
    flex: none;
    width: 17px;
    height: 17px;
    margin-right: 3px;
    background-color: #fff;
    border: 1px solid #333;
}

.rule {
    flex: none;
    width: 100px;
    height: 1px;
    margin: 0 6px 0 3px;
    background-color: #222;
}

.rule.short {
    width: 92px;
    margin: 0 10px 0 7px;
}

.prop-combos {
    flex: 1;
    padding-right: 4px;
    display: flex;
    flex-direction: column;
    gap: 2px;
}

/* work area */
.work {
    flex: 1;
    min-height: 0;
    display: flex;
}

.dock {
    flex: none;
    display: flex;
    flex-direction: column;
    padding-bottom: 5px;
    background-color: #d3e3f6;
}

.toolbox {
    width: 154px;
    padding-right: 3px;
}

.manager {
    width: 302px;
}

.dock-head {
    height: 25px;
    padding: 0 4px 2px 3px;
    display: flex;
    align-items: center;
    gap: 5px;
    color: #2b5ba2;
    background-color: #b6d0ee;
}

.dock-head span {
    flex: 1;
}

.dock-head svg {
    width: 12px;
    height: 12px;
}

.dock-body {
    flex: 1;
    min-height: 0;
    margin: 4px 4px 1px 3px;
    padding: 1px;
    display: flex;
    flex-direction: column;
    background-color: #fff;
    color: #333;
    font-family: "Liberation Mono", "Noto Sans CJK SC", monospace;
}

.fold {
    display: flex;
    flex-direction: column;
    border: 1px solid #bccde2;
    border-bottom: 0;
}

.fold.first {
    height: 197px;
}

.fold.second {
    height: 147px;
}

.fold button {
    flex: 1;
    min-height: 24px;
    display: flex;
    align-items: center;
    justify-content: space-between;
    padding: 1px 8px 0 25px;
    background-color: #dce9fb;
    border-bottom: 1px solid #bccde2;
}

.fold .open {
    color: #000;
}

.sub {
    padding-bottom: 1px;
    border-bottom: 1px solid #b3d0e6;
}

.sub + .fold {
    border-top: 0;
}

.sub button {
    display: flex;
    align-items: center;
    gap: 4px;
    height: 25px;
    padding-left: 2px;
}

.sub svg {
    width: 20px;
    height: 20px;
    fill: none;
}

.bars {
    margin-top: auto;
    display: flex;
    flex-direction: column;
}

.bars button {
    height: 32px;
    display: flex;
    align-items: center;
    gap: 7px;
    padding-left: 6px;
    color: #27364f;
    background: linear-gradient(#dbe9fc, #c4dafa 45%, #a9c8f5 50%, #bdd6fb);
    border-bottom: 1px solid #e6effb;
}

.bars .on {
    color: #4a3310;
    background: linear-gradient(#fed29a, #fdbb66 45%, #fb9f2e 50%, #fdcb62);
}

.bars svg {
    width: 28px;
    height: 28px;
}

.center {
    flex: 1;
    min-width: 0;
    display: flex;
    flex-direction: column;
    padding-bottom: 5px;
}

.doc-tabs {
    flex: none;
    height: 20px;
    display: flex;
    background-color: #efefef;
    margin-right: 3px;
}

.doc-tabs button {
    display: flex;
    align-items: center;
    justify-content: space-between;
    width: 87px;
    height: 20px;
    padding: 4px 9px 0 20px;
    color: #333;
    font-family: "Liberation Mono", "Noto Sans CJK SC", monospace;
    font-size: 14px;
    background: linear-gradient(#e3f1fd, #a9d1f7);
    border-radius: 8px 3px 0 0;
}

.doc-tabs .on {
    width: 118px;
    padding-left: 29px;
    background: linear-gradient(#fbd27c, #ffd380 50%, #fff0c0);
    clip-path: polygon(0 100%, 16px 15%, 24px 0, 100% 0, 100% 100%);
}

.doc-tabs svg {
    width: 10px;
    height: 10px;
}

.canvas {
    flex: 1 1 0;
    min-height: 0;
    width: calc(100% - 3px);
    background-color: #202833;
}

/* drawing */
.dim { fill: none; stroke: #1fa535; stroke-width: 1; }
.dim.strong { stroke: #19c22f; stroke-width: 2; }
.teal { fill: none; stroke: #2a95a5; stroke-width: 1; }
.bay { fill: #0e3c48; stroke: #23808f; }
.glass { fill: none; stroke: #27c3d8; stroke-width: 2; }
.wall { fill: none; stroke: #c3c9ce; stroke-width: 1; }
.faint { stroke: #4c565f; }
.red { stroke: #b82a26; }
.yellow { stroke: #b5ae3c; }
.arrow { fill: #4f9a62; }

.dim-text, .level {
    fill: #f2f4f6;
    font-family: "Liberation Sans", sans-serif;
    font-size: 7px;
}

.dim-text, .bubble, .area, .ucs, .compass {
    text-anchor: middle;
}

.bubble {
    fill: #e6eaee;
    font-family: "Liberation Serif", serif;
    font-size: 13px;
}

.area {
    fill: #f0170f;
    font-size: 7px;
    font-weight: bold;
}

.caption {
    fill: #dde1e5;
    font-family: "Liberation Sans", "Noto Sans CJK SC", sans-serif;
    font-size: 11px;
}

.caption.scale {
    font-size: 10px;
}

.touch {
    fill: #2023e0;
    fill-opacity: 0.85;
}

.cursor {
    fill: none;
    stroke: #a3a9b0;
}

.ucs {
    fill: #a3a9b0;
    font-family: Lato, "Open Sans", sans-serif;
    font-weight: 300;
    font-size: 21px;
}

.compass {
    fill: #cdd0d2;
    font-size: 19px;
}

.compass .top {
    fill: #7e817c;
    font-size: 26px;
}

.layout-tabs {
    flex: none;
    height: 23px;
    margin-right: 3px;
    padding-left: 49px;
    display: flex;
    align-items: center;
    color: #222;
    background-color: #d4e3f2;
}

.layout-tabs button {
    width: 48px;
    height: 22px;
    text-align: left;
}

.layout-tabs .on {
    width: 47px;
    text-align: center;
    color: #fff;
    font-weight: bold;
    background-color: #1d2530;
    clip-path: polygon(0 0, 100% 0, 80% 100%, 20% 100%);
}

.layout-tabs button:last-child {
    width: 28px;
}

.layout-tabs button:not(.on) {
    background: linear-gradient(118deg, transparent calc(100% - 9px), #b0bfd0 calc(100% - 9px), #b0bfd0 calc(100% - 8px), transparent calc(100% - 8px));
}

/* command line */
.command {
    flex: none;
    height: 95px;
    margin: 6px 2px 0 3px;
    display: flex;
    background-color: #b2cdec;
}

.command-side {
    width: 25px;
    padding: 7px 0 0 1px;
    display: flex;
    flex-direction: column;
    gap: 6px;
    border-top: 1px solid #8ba8c9;
}

.command-side svg {
    width: 18px;
    height: 18px;
}

.command-main {
    flex: 1;
    min-width: 0;
    display: flex;
    flex-direction: column;
    border: 1px solid #76879c;
    border-width: 1px 0 0 1px;
    background-color: #fff;
    color: #222;
    font-family: "Noto Sans CJK SC", sans-serif;
    font-size: 17px;
}

.command-main b {
    font-family: "DejaVu Sans Mono", monospace;
    font-weight: normal;
    font-size: 15px;
    line-height: 16px;
    white-space: pre;
}

.history {
    height: 71px;
    display: flex;
    overflow: hidden;
}

.lines {
    flex: 1;
    padding-left: 3px;
    padding-bottom: 1px;
    display: flex;
    flex-direction: column;
    justify-content: flex-end;
}

.lines p {
    flex: none;
    font-size: 17px;
    line-height: 22px;
}

.vscroll {
    width: 21px;
    padding: 5px 0;
    display: flex;
    flex-direction: column;
    align-items: center;
    justify-content: space-between;
    background-color: #f0f0f0;
}

.vscroll span {
    width: 21px;
    height: 21px;
    margin-top: 8px;
    background-color: #cdcdcd;
}

.vscroll svg, .hscroll svg {
    width: 12px;
    height: 12px;
    fill: none;
    stroke: #333;
    stroke-width: 1.5;
}

.prompt {
    flex: 1;
    padding-left: 3px;
    padding-bottom: 2px;
    display: flex;
    align-items: center;
    border-top: 1px solid #aaa;
}

.prompt input {
    flex: 1;
    min-width: 0;
    outline: none;
}

.hscroll {
    width: 100px;
    height: 21px;
    margin-right: 23px;
    padding: 0 5px;
    display: flex;
    align-items: center;
    background-color: #f0f0f0;
}

.hscroll span {
    width: 21px;
    height: 21px;
    margin-left: 5px;
    background-color: #cdcdcd;
}

.hscroll i {
    flex: 1;
}

/* project manager */
.manager .dock-body {
    margin-left: 4px;
    margin-right: 3px;
}

.project {
    height: 21px;
    margin-bottom: 3px;
    padding: 0 5px 0 2px;
    display: flex;
    align-items: center;
    background-color: #e2e2e2;
    border: 1px solid #b9b9b9;
}

.project select {
    font-family: "Liberation Mono", "Noto Sans CJK SC", monospace;
    font-size: 14px;
    color: #333;
}

.project svg {
    width: 12px;
    height: 12px;
}

.floor-tools {
    height: 33px;
    padding: 0 4px;
    display: flex;
    align-items: center;
    gap: 10px;
    background-color: #f0f0f0;
}

.floor-tools svg {
    width: 20px;
    height: 20px;
}

.floor-tools .cut {
    padding-left: 6px;
    border-left: 1px solid #999;
    margin-left: -5px;
}

table {
    width: 100%;
    table-layout: fixed;
    border-collapse: collapse;
    background-color: #fff;
}

th, td {
    height: 20px;
    padding: 0 0 0 2px;
    border: 1px solid #cfcfcf;
    font-size: 13px;
    line-height: 19px;
    font-weight: normal;
    text-align: left;
    white-space: nowrap;
    overflow: hidden;
}

th {
    background-color: #f0f0f0;
    border-color: #a0a0a0;
    color: #333;
}

thead th {
    height: 21px;
    font-size: 14px;
}

.c0 { width: 20px; }
.c1 { width: 38px; }
.c2 { width: 51px; }

.blank {
    height: 140px;
    border: 1px solid #9a9a9a;
    border-top: 0;
}

/* status bar */
.status {
    flex: none;
    height: 30px;
    padding-left: 2px;
    display: flex;
    align-items: center;
    background: linear-gradient(#8fb2dd 0, #8fb2dd 1px, #d5e5fb 2px, #c4dafa 45%, #abc9f7 50%, #bcd5fc);
}

.status .txt {
    display: flex;
    align-items: center;
    gap: 4px;
    font-size: 14px;
}

.status .scale-button {
    width: 82px;
}

.unit {
    width: 66px;
}

.coords {
    width: 162px;
    font-size: 13px;
}

.toggles {
    display: flex;
    align-items: center;
    height: 28px;
}

.toggles.right {
    margin-left: auto;
    padding-right: 8px;
}

.toggles button, .tray button {
    width: 24px;
    height: 24px;
    display: flex;
    align-items: center;
    justify-content: center;
}

.toggles .txt {
    width: 28px;
}

.toggles .on {
    background: linear-gradient(#fdf5d2, #fdeaa8 50%, #fad97a 52%, #fdf0b8);
}

.toggles svg, .tray svg {
    width: 19px;
    height: 19px;
}

.dim-ic {
    opacity: 0.5;
}

.tray {
    align-self: stretch;
    padding-left: 3px;
    display: flex;
    align-items: center;
    background: linear-gradient(#8fb2dd 0, #a3bfe8 2px, #86a9df 50%, #7b9fdb);
    color: #1f3f78;
}

.tray span {
    padding: 0 2px 0 3px;
    font-size: 14px;
}

/* floating input method bar */
.ime {
    position: absolute;
    right: 1px;
    bottom: 49px;
    width: 204px;
    height: 30px;
    padding-left: 23px;
    display: flex;
    align-items: center;
    justify-content: space-around;
    background-color: #fff;
    box-shadow: 0 0 2px #8aa;
}

.ime-logo {
    position: absolute;
    left: -17px;
    top: -6px;
    width: 38px;
    height: 38px;
}

.ime button {
    width: 22px;
    color: #0f67c0;
    font-family: Lato, sans-serif;
    font-size: 24px;
    line-height: 30px;
}

.ime button svg {
    width: 20px;
    height: 20px;
    fill: #0f67c0;
}
```
